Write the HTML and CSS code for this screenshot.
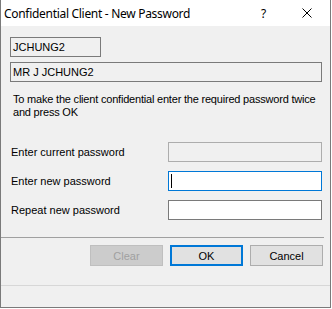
FILE: index.html
```html
<!DOCTYPE html>
<html lang="en">
<head>
  <meta charset="UTF-8" />
  <title>Confidential Client - New Password</title>
  <link rel="stylesheet" href="styles.css">
</head>
<body>

  <div class="window">
    <!-- title bar -->
    <div class="titlebar">
      <span class="title">Confidential Client - New Password</span>
      <span class="help">?</span>
      <span class="close">
        <svg width="10" height="10" viewBox="0 0 10 10">
          <path d="M0.5 0.5 L9.5 9.5 M9.5 0.5 L0.5 9.5" stroke="#000" stroke-width="1" fill="none" />
        </svg>
      </span>
    </div>

    <div class="body">
      <div class="field short">JCHUNG2</div>
      <div class="field wide">MR J JCHUNG2</div>

      <p class="hint">To make the client confidential enter the required password twice<br>and press OK</p>

      <div class="rows">
        <div class="row">
          <span class="label">Enter current password</span>
          <div class="input disabled"></div>
        </div>
        <div class="row">
          <span class="label">Enter new password</span>
          <div class="input focused"><span class="caret"></span></div>
        </div>
        <div class="row">
          <span class="label">Repeat new password</span>
          <div class="input"></div>
        </div>
      </div>

      <div class="sep"></div>

      <div class="buttons">
        <button class="btn disabled">Clear</button>
        <button class="btn default">OK</button>
        <button class="btn">Cancel</button>
      </div>
    </div>

    <div class="status"></div>
  </div>

</body>
</html>
```

FILE: styles.css
```css
html, body {
  margin: 0;
  padding: 0;
  background: #fff;
}

/* dialog frame */
.window {
  width: 331px;
  height: 308px;
  box-sizing: border-box;
  border: 1px solid #7a7a7a;
  border-top: none;
  background: #f0f0f0;
  display: flex;
  flex-direction: column;
  font-family: "Liberation Sans", Arial, sans-serif;
  font-size: 11px;
  color: #000;
}

/* title bar */
.titlebar {
  height: 26px;
  flex-shrink: 0;
  background: #fff;
  display: flex;
  align-items: center;
  font-family: "Noto Sans", "Open Sans", sans-serif;
  font-size: 12px;
}
.title {
  padding-left: 3px;
  flex: 1;
  letter-spacing: -0.3px;
}
.help {
  width: 10px;
  margin-right: 31px;
  font-size: 12px;
}
.close {
  width: 10px;
  height: 10px;
  margin-right: 18px;
  display: flex;
}

/* main area */
.body {
  flex: 1;
  padding: 11px 9px 0 9px;
}

.field {
  box-sizing: border-box;
  height: 20px;
  border: 1px solid #7a7a7a;
  padding: 0 2px;
  line-height: 18px;
}
.field.short { width: 91px; }
.field.wide  { width: 312px; margin-top: 5px; }

.hint {
  margin: 11px 0 0 3px;
  line-height: 13px;
  white-space: nowrap;
  letter-spacing: -0.2px;
}

/* password rows */
.rows {
  margin-top: 23px;
  display: flex;
  flex-direction: column;
  gap: 9px;
}
.row {
  display: flex;
  align-items: center;
  justify-content: space-between;
  width: 312px;
}
.label {
  padding-left: 1px;
}
.input {
  box-sizing: border-box;
  width: 154px;
  height: 20px;
  border: 1px solid #7a7a7a;
  background: #fff;
  display: flex;
  align-items: center;
}
.input.disabled {
  background: #f0f0f0;
  border-color: #adadad;
}
.input.focused {
  border-color: #0078d7;
}
.caret {
  width: 1px;
  height: 14px;
  margin-left: 2px;
  background: #000;
}

/* separator above buttons */
.sep {
  margin: 17px 0 0 -9px;
  width: 323px;
  height: 1px;
  background: #a0a0a0;
}

.buttons {
  margin-top: 7px;
  display: flex;
  justify-content: flex-end;
  gap: 7px;
  width: 313px;
}
.btn {
  box-sizing: border-box;
  width: 73px;
  height: 21px;
  margin: 0;
  padding: 0;
  border: 1px solid #adadad;
  background: #e1e1e1;
  font-family: "Liberation Sans", Arial, sans-serif;
  font-size: 11px;
  color: #000;
}
.btn.disabled {
  background: #cccccc;
  border-color: #bfbfbf;
  color: #a0a0a0;
}
.btn.default {
  border: 2px solid #0078d7;
}

/* status strip */
.status {
  height: 21px;
  flex-shrink: 0;
  border-top: 1px solid #d7d7d7;
}
```
